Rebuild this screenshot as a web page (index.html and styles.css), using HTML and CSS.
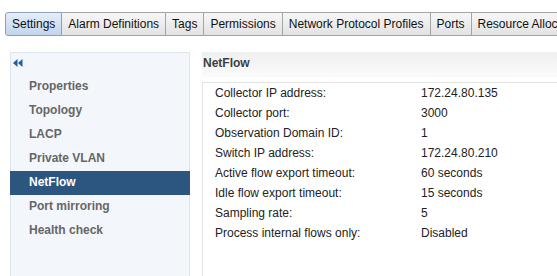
FILE: index.html
```html
<!DOCTYPE html>
<html lang="en">
<head>
    <meta charset="UTF-8">
    <meta name="viewport" content="width=device-width, initial-scale=1.0">
    <title>Distributed Switch | NetFlow</title>
    <link rel="stylesheet" href="styles.css">
</head>
<body>
    <div class="tabs">
        <div class="tab active">Settings</div>
        <div class="tab">Alarm Definitions</div>
        <div class="tab">Tags</div>
        <div class="tab">Permissions</div>
        <div class="tab">Network Protocol Profiles</div>
        <div class="tab">Ports</div>
        <div class="tab">Resource Allocation</div>
    </div>

    <div class="main">
        <div class="sidebar">
            <div class="collapse">
                <svg width="10" height="8" viewBox="0 0 10 8">
                    <polygon points="0,4 4.5,0 4.5,8" fill="#1d5ea8"/>
                    <polygon points="5,4 9.5,0 9.5,8" fill="#1d5ea8"/>
                </svg>
            </div>
            <div class="nav-item">Properties</div>
            <div class="nav-item">Topology</div>
            <div class="nav-item">LACP</div>
            <div class="nav-item">Private VLAN</div>
            <div class="nav-item selected">NetFlow</div>
            <div class="nav-item">Port mirroring</div>
            <div class="nav-item">Health check</div>
        </div>

        <div class="content">
            <div class="content-header">NetFlow</div>
            <div class="details">
                <div class="row"><span class="label">Collector IP address:</span><span>172.24.80.135</span></div>
                <div class="row"><span class="label">Collector port:</span><span>3000</span></div>
                <div class="row"><span class="label">Observation Domain ID:</span><span>1</span></div>
                <div class="row"><span class="label">Switch IP address:</span><span>172.24.80.210</span></div>
                <div class="row"><span class="label">Active flow export timeout:</span><span>60 seconds</span></div>
                <div class="row"><span class="label">Idle flow export timeout:</span><span>15 seconds</span></div>
                <div class="row"><span class="label">Sampling rate:</span><span>5</span></div>
                <div class="row"><span class="label">Process internal flows only:</span><span>Disabled</span></div>
            </div>
        </div>
    </div>
</body>
</html>
```

FILE: styles.css
```css
:root {
    --tab-border: #a4a4a4;
    --side-bg: #f3f6fa;
    --side-border: #dfe5ec;
    --selected: #2c5580;
    --text: #222;
    --muted: #666;
}

* {
    margin: 0;
    padding: 0;
    box-sizing: border-box;
    font-family: 'Liberation Sans', Arial, sans-serif;
}

body {
    background: white;
    color: var(--text);
    overflow: hidden;
    height: 276px;
}

.tabs {
    display: flex;
    padding: 12px 0 0 5px;
    white-space: nowrap;
}

.tab {
    height: 24px;
    line-height: 22px;
    padding: 0 6px;
    font-size: 12px;
    color: #111;
    border: 1px solid var(--tab-border);
    border-left: none;
    background: linear-gradient(#f7f7f7, #e2e2e2);
    flex-shrink: 0;
}

.tab.active {
    border-left: 1px solid #8e9fb4;
    border-color: #8e9fb4;
    border-radius: 3px 0 0 3px;
    background: linear-gradient(#e4eefa, #c2d5ee);
}

.main {
    display: flex;
    gap: 12px;
    margin-top: 16px;
    padding-left: 10px;
}

.sidebar {
    width: 180px;
    flex-shrink: 0;
    height: 224px;
    background: var(--side-bg);
    border: 1px solid var(--side-border);
    border-bottom: none;
}

.collapse {
    height: 22px;
    padding: 6px 0 0 2px;
}

.collapse svg {
    display: block;
}

.nav-item {
    height: 24px;
    line-height: 23px;
    padding-left: 18px;
    font-size: 12px;
    font-weight: 700;
    color: var(--muted);
}

.nav-item.selected {
    background: var(--selected);
    color: white;
    margin: 0 -1px;
    padding-left: 19px;
}

.content {
    flex: 1;
}

.content-header {
    height: 25px;
    line-height: 22px;
    padding-left: 1px;
    font-size: 12px;
    font-weight: 700;
    color: #3a3f45;
    background: linear-gradient(#efefef, #fbfbfb);
}

.details {
    margin-top: 5px;
    height: 194px;
    border-top: 1px solid #e3e3e3;
    border-left: 1px solid #e3e3e3;
    padding-left: 12px;
}

.row {
    display: flex;
    height: 20px;
    line-height: 20px;
    font-size: 12px;
    white-space: nowrap;
}

.label {
    width: 206px;
    flex-shrink: 0;
}
```
